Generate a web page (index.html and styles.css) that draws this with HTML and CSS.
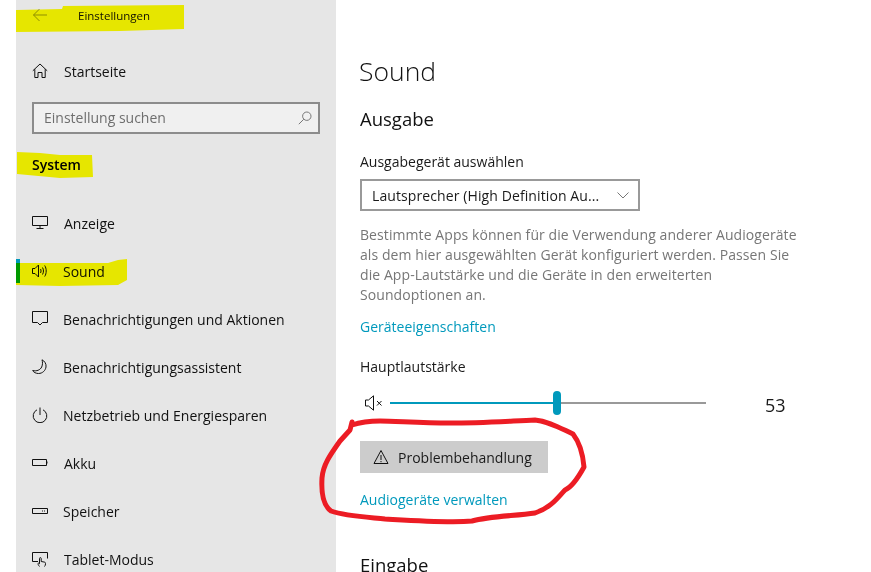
FILE: index.html
```html
<!DOCTYPE html>
<html lang="de">
<head>
<meta charset="utf-8">
<title>Einstellungen</title>
<link rel="stylesheet" href="styles.css">
</head>
<body>
<div class="window">
  <aside class="sidebar">
    <header class="titlebar">
      <svg class="back" width="16" height="16" viewBox="0 0 16 16"><path d="M15 8H1.500M7.500 2 1.500 8l6 6" fill="none" stroke="#8f8f8f" stroke-width="1"/></svg>
      <span class="app-title">Einstellungen</span>
    </header>
    <a class="nav home">
      <svg class="icon" width="16" height="16" viewBox="0 0 16 16"><path d="M.8 7.800 8 1l7.200 6.800M2.800 6.200V14.500H6V9.500H10V14.500H13.200V6.200" fill="none" stroke="#111" stroke-width="1"/></svg>
      <span>Startseite</span>
    </a>
    <div class="search">
      <span>Einstellung suchen</span>
      <svg width="14" height="14" viewBox="0 0 14 14"><circle cx="8.800" cy="5.200" r="4.200" fill="none" stroke="#777" stroke-width="1"/><path d="M5.800 8.200 .8 13.200" stroke="#777" stroke-width="1"/></svg>
    </div>
    <h2 class="group">System</h2>
    <nav class="list">
      <a class="nav">
        <svg class="icon" width="16" height="16" viewBox="0 0 16 16"><path d="M.5 1.500h15v9H.5zM8 10.500v3M4.500 13.500h7" fill="none" stroke="#111"/></svg>
        <span class="shift">Anzeige</span>
      </a>
      <a class="nav active">
        <svg class="icon" width="16" height="16" viewBox="0 0 16 16"><path d="M.5 5.500H3L6.500 2v12L3 10.500H.5zM8.500 6c.7 1.200.7 2.800 0 4M10.500 4.500c1.300 2.200 1.300 4.800 0 7M12.700 2.500c2 3 2 8 0 11" fill="none" stroke="#111"/></svg>
        <span>Sound</span>
      </a>
      <a class="nav">
        <svg class="icon" width="16" height="16" viewBox="0 0 16 16"><path d="M.5 .5h15v11h-5L8 14l-2.500-2.500h-5z" fill="none" stroke="#111"/></svg>
        <span>Benachrichtigungen und Aktionen</span>
      </a>
      <a class="nav">
        <svg class="icon" width="16" height="16" viewBox="0 0 16 16"><path d="M10 .8c2.500 1.200 4.500 4 4 7.200-.5 3.500-3.500 6.500-7.500 6.500-2.500 0-5-1.200-5.800-3 4 1 7.500-.5 9-3.500 1-2.500 1-5 .3-7.200z" fill="none" stroke="#111"/></svg>
        <span>Benachrichtigungsassistent</span>
      </a>
      <a class="nav">
        <svg class="icon" width="16" height="16" viewBox="0 0 16 16"><path d="M5 2.800a6.800 6.800 0 1 0 6 0M8 .5v7.500" fill="none" stroke="#111"/></svg>
        <span>Netzbetrieb und Energiesparen</span>
      </a>
      <a class="nav">
        <svg class="icon" width="16" height="16" viewBox="0 0 16 16"><path d="M.5 4.500h14v6H.5z" fill="none" stroke="#111"/><path d="M14.500 6.500h1v2h-1z" fill="#111"/></svg>
        <span class="shift">Akku</span>
      </a>
      <a class="nav">
        <svg class="icon" width="16" height="16" viewBox="0 0 16 16"><path d="M.5 5.500h15v5H.5z" fill="none" stroke="#111"/><path d="M10 8h1M12 8h1" stroke="#111"/></svg>
        <span>Speicher</span>
      </a>
      <a class="nav">
        <svg class="icon" width="16" height="16" viewBox="0 0 16 16"><path d="M6 10.500H.5v-9h15v6M7.500 15.500c-1-1.200-1.500-2-1.500-2.800 0-.6.800-.8 1.500 0V7.500c0-1.200 1.700-1.200 1.700 0v3l3.300.6c1 .2 1 1 1 1.900 0 1-.5 1.800-1 2.500" fill="none" stroke="#111"/></svg>
        <span class="shift">Tablet-Modus</span>
      </a>
    </nav>
  </aside>
  <main class="content">
    <h1 class="page-title">Sound</h1>
    <h2 class="section">Ausgabe</h2>
    <label class="field-label">Ausgabegerät auswählen</label>
    <div class="select">
      <span>Lautsprecher (High Definition Au...</span>
      <svg width="12" height="7" viewBox="0 0 12 7"><path d="M.5.500 6 6 11.500.500" fill="none" stroke="#777"/></svg>
    </div>
    <p class="description">Bestimmte Apps können für die Verwendung anderer Audiogeräte als dem hier ausgewählten Gerät konfiguriert werden. Passen Sie die App-Lautstärke und die Geräte in den erweiterten Soundoptionen an.</p>
    <a class="link props">Geräteeigenschaften</a>
    <div class="volume-label">Hauptlautstärke</div>
    <div class="volume">
      <svg width="20" height="16" viewBox="0 0 20 16"><path d="M.5 5H3.500L8.500 .8v14.400L3.500 11H.5z" fill="none" stroke="#111"/><path d="M12 6l4.500 4.500M16.500 6 12 10.500" stroke="#111"/></svg>
      <div class="track"><div class="fill"></div><div class="thumb"></div></div>
      <span class="value">53</span>
    </div>
    <button class="trouble">
      <svg width="16" height="16" viewBox="0 0 16 16"><path d="M8 1.500 15 14.500H1zM8 6v5M8 12v1.200" fill="none" stroke="#111"/></svg>
      <span>Problembehandlung</span>
    </button>
    <a class="link manage">Audiogeräte verwalten</a>
    <h2 class="section input">Eingabe</h2>
  </main>
</div>
<svg class="ink" width="871" height="572" viewBox="0 0 871 572">
  <path class="marker" d="M16 10 62 9 63 6 184 5 184 29 120 31 16 32Z"/>
  <path class="marker" d="M17 152 40 153 60 155 92 155 93 177 60 178 17 174Z"/>
  <path class="marker" d="M16 263 108 263 118 260 127 259 127 280 118 285 60 286 16 285Z"/>
  <path class="pen" d="M352 422 350 430 340 441C330 455 323 465 322 478 321 495 324 506 331 511 345 516 365 517 385 519 420 521 450 523 472 521 490 516 515 516 535 513 552 507 558 497 565 490 572 487 578 478 584 467 583 455 580 443 573 434 560 428 548 421 535 420 510 421 480 423 450 423 420 423 395 421 380 421 368 421 358 423 352 425"/>
</svg>
</body>
</html>
```
FILE: styles.css
```css
* { box-sizing: border-box; }
html, body { margin: 0; height: 100%; background: #fff; overflow: hidden; }
body { font-family: "Open Sans", "Liberation Sans", sans-serif; font-size: 14px; color: #1a1a1a; }
.window { display: flex; height: 572px; padding-left: 16px; overflow: hidden; }

.sidebar { flex: 0 0 320px; background: #e6e6e6; height: 572px; }
.titlebar { display: flex; align-items: center; height: 30px; }
.back { margin-left: 16px; }
.app-title { margin-left: 30px; font-size: 11.5px; color: #111; }
.nav { display: flex; align-items: center; height: 48px; padding-left: 16px; color: #111; position: relative; }
.nav .icon { flex: none; margin-right: 15px; }
.nav .shift { margin-left: 1px; }
.home { margin-top: 17px; }
.home span { margin-left: 1px; }
.search { display: flex; align-items: center; justify-content: space-between; margin: 7px 16px 0; height: 32px; padding: 0 6px 1px 10px; background: #f0f0f0; border: 2px solid #8c8c8c; color: #6e6e6e; }
.search svg { margin-top: 1px; }
.group { margin: 17px 0 0 16px; font-size: 14px; line-height: 28px; font-weight: 600; color: #000; }
.list { margin-top: 20px; }
.active::before { content: ""; position: absolute; left: 0; top: 12px; width: 4px; height: 24px; background: #0099bc; }

.content { flex: 1; padding-left: 24px; min-width: 0; }
.page-title { margin: 53px 0 0 -1px; font-size: 26.5px; line-height: 36px; font-weight: 300; color: #111; }
.section { margin: 0; font-size: 18.5px; line-height: 28px; font-weight: 400; color: #111; }
.content > .section:first-of-type { margin-top: 16px; }
.field-label { display: block; margin-top: 19px; line-height: 20px; }
.select { display: flex; align-items: center; justify-content: space-between; width: 280px; height: 32px; margin-top: 7px; padding: 0 9px 0 10px; border: 2px solid #999; white-space: nowrap; letter-spacing: .1px; }
.description { width: 445px; margin: 14px 0 0; line-height: 20px; color: #767676; letter-spacing: .08px; }
.link { display: block; color: #0099bc; line-height: 20px; }
.props { margin-top: 12px; }
.volume-label { margin-top: 20px; line-height: 20px; }
.volume { display: flex; align-items: center; height: 32px; margin-top: 10px; }
.volume svg { flex: none; margin: 0 9px 0 5px; }
.track { position: relative; width: 316px; height: 2px; margin-left: -4px; background: #999; }
.fill { width: 166px; height: 2px; background: #0099bc; }
.thumb { position: absolute; left: 163px; top: -11px; width: 8px; height: 24px; border-radius: 4px; background: #0099bc; }
.value { margin-left: 59px; margin-top: 4px; font-size: 18px; line-height: 24px; }
.trouble { display: flex; align-items: center; width: 188px; height: 32px; margin-top: 22px; padding: 0 0 0 13px; border: 0; background: #ccc; font: inherit; color: #1a1a1a; }
.trouble svg { margin-right: 9px; }
.manage { margin-top: 17px; }
.input { margin-top: 41px; }

.ink { position: absolute; left: 0; top: 0; pointer-events: none; }
.marker { fill: #ffff00; mix-blend-mode: multiply; }
.pen { fill: none; stroke: #ec1c24; stroke-width: 5; stroke-linejoin: round; stroke-linecap: round; }
```
